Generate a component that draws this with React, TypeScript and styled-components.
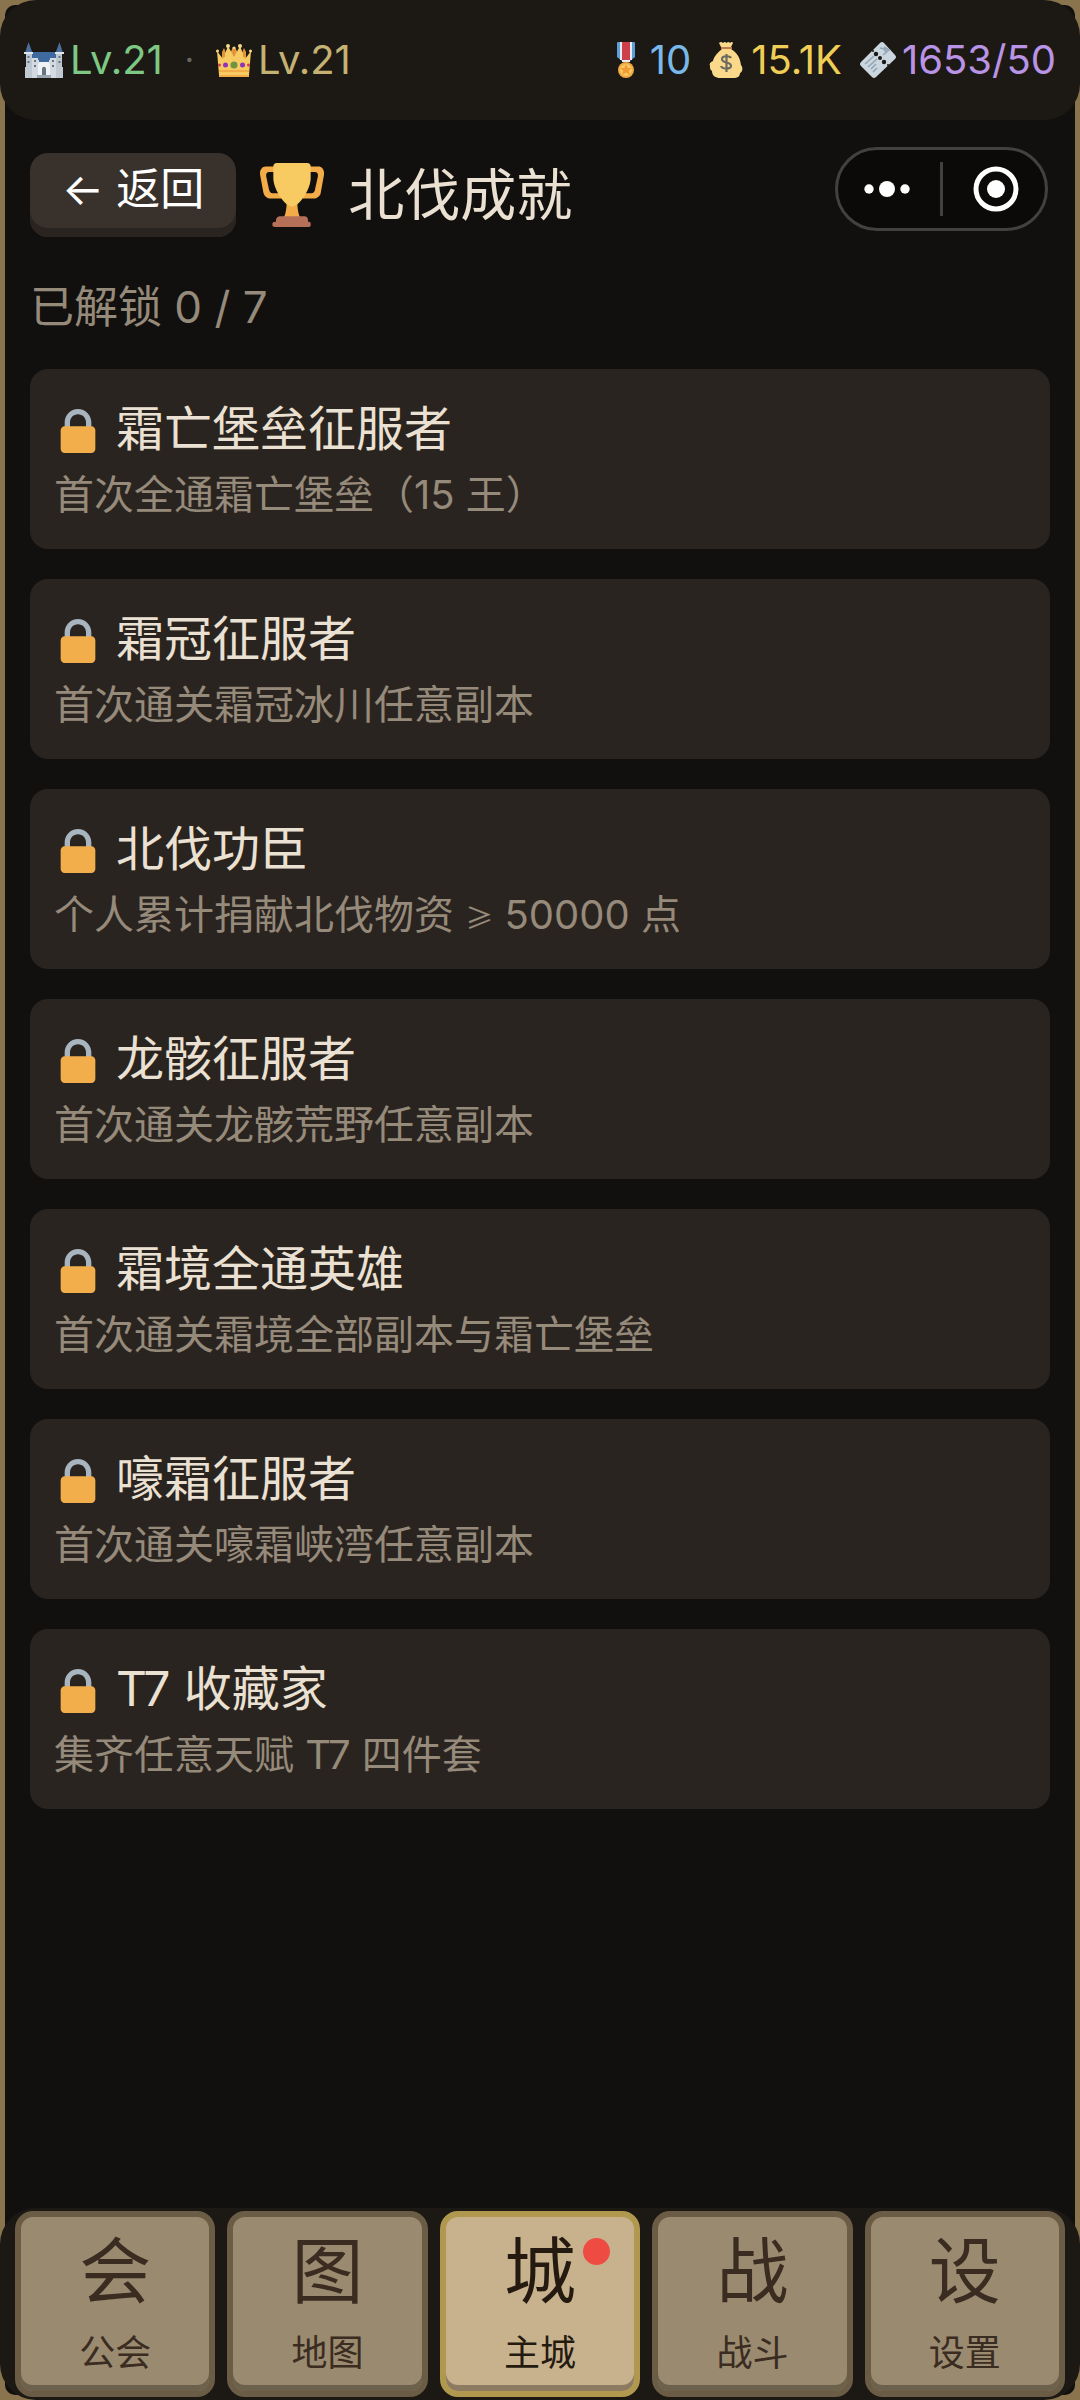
import React from "react";
import styled, { createGlobalStyle } from "styled-components";

const Global = createGlobalStyle`
  *, *::before, *::after { box-sizing: border-box; }
  body {
    margin: 0;
    background: #8a744e;
    font-family: Inter, "Noto Sans CJK SC", "Noto Sans", sans-serif;
    font-weight: 400;
  }
  button { font: inherit; border: 0; margin: 0; padding: 0; cursor: pointer; }
  h1, h2, p, ul { margin: 0; padding: 0; font-weight: 400; }
  svg { display: block; flex: none; }
`;

const Shell = styled.div`
  position: relative;
  isolation: isolate;
  display: flex;
  flex-direction: column;
  min-height: 100vh;
  background: #8a744e;

  &::before {
    content: "";
    position: absolute;
    z-index: -1;
    inset: 5px;
    border-radius: 10px;
    background: #11100e;
  }
`;

const StatusBar = styled.header`
  display: flex;
  align-items: center;
  justify-content: space-between;
  height: 120px;
  padding: 0 24px;
  border-radius: 36px;
  background: #1c1914;
`;

const StatGroup = styled.div<{ $gap: number }>`
  display: flex;
  align-items: center;
  gap: ${(p) => p.$gap}px;
`;

const Stat = styled.span<{ $color: string }>`
  display: flex;
  align-items: center;
  gap: 6px;
  color: ${(p) => p.$color};
  font-size: 40px;
  line-height: 60px;
`;

const Separator = styled.span`
  color: #68676a;
  font-size: 32px;
  line-height: 60px;
`;

const Main = styled.main`
  flex: 1;
  padding: 33px 30px 60px;
`;

const TitleRow = styled.div`
  display: flex;
  align-items: center;
  gap: 24px;
`;

const BackButton = styled.button`
  height: 84px;
  padding: 0 32px 12px;
  border-radius: 18px;
  background: #39312b;
  box-shadow: inset 0 -9px 0 #29241f;
  color: #ffffff;
  font-size: 44px;
  line-height: 60px;
`;

const Title = styled.h1`
  display: flex;
  align-items: center;
  gap: 24px;
  color: #ebe1d3;
  font-size: 56px;
  line-height: 80px;
`;

const Progress = styled.p`
  margin: 40px 0 32px;
  color: #968a7a;
  font-size: 44px;
  line-height: 60px;
`;

const List = styled.ul`
  display: flex;
  flex-direction: column;
  gap: 30px;
  list-style: none;
`;

const Card = styled.li`
  display: flex;
  flex-direction: column;
  gap: 8px;
  padding: 30px 24px 26px;
  border-radius: 18px;
  background: #2a2420;
`;

const CardTitle = styled.h2`
  display: flex;
  align-items: center;
  gap: 14px;
  color: #ebe1d3;
  font-size: 48px;
  line-height: 60px;
`;

const CardText = styled.p`
  color: #968a7a;
  font-size: 40px;
  line-height: 56px;
`;

const Sign = styled.span`
  font-family: "Noto Sans CJK SC", sans-serif;
  font-size: 28px;
  line-height: 1;
`;

/* The host app's menu capsule floats above the page. */
const Capsule = styled.div`
  position: absolute;
  top: 147px;
  right: 32px;
  display: flex;
  align-items: center;
  width: 213px;
  height: 84px;
  border: 3px solid #424140;
  border-radius: 42px;
  background: #0b0a09;
`;

const CapsuleButton = styled.button`
  display: flex;
  flex: 1;
  align-items: center;
  justify-content: center;
  height: 100%;
  background: transparent;

  &:first-child { padding-right: 4px; }
  &:last-child { padding-left: 4px; }
`;

const CapsuleLine = styled.span`
  width: 3px;
  height: 54px;
  background: #424140;
`;

const Nav = styled.nav`
  display: grid;
  grid-template-columns: repeat(5, 1fr);
  gap: 12px;
  padding: 3px 15px;
  border-radius: 36px;
  background: #1c1914;
`;

const NavTile = styled.button<{ $active: boolean }>`
  position: relative;
  display: flex;
  flex-direction: column;
  align-items: center;
  gap: 20px;
  height: 186px;
  padding-top: 14px;
  border: 6px solid ${(p) => (p.$active ? "#b0984f" : "#6b5c46")};
  border-radius: 18px;
  background: ${(p) => (p.$active ? "#c8b28d" : "#9a8a70")};
  box-shadow: inset 0 -6px 0 ${(p) => (p.$active ? "#8c7b60" : "#6c614b")};
  color: ${(p) => (p.$active ? "#241a10" : "#3a2c20")};
`;

const NavGlyph = styled.span`
  font-size: 72px;
  line-height: 80px;
`;

const NavLabel = styled.span`
  font-size: 36px;
  line-height: 44px;
`;

const Dot = styled.span`
  position: absolute;
  top: 21px;
  right: 24px;
  width: 27px;
  height: 27px;
  border-radius: 50%;
  background: #ee4c43;
`;

const CastleIcon = () => (
  <svg width="40" height="36" viewBox="0 0 40 36" aria-hidden="true">
    <path fill="#3f6aa0" d="M8 10h24v8H8z" />
    <path fill="#4a6f9c" d="M4.500 0 8.500 11H1zM35.500 0 39 11h-7.500z" />
    <path fill="#bcc6d0" d="M2 11h6v25H2zM32 11h6v25h-6z" />
    <path fill="#dfe5ea" d="M0 10h9v2H0zM31 10h9v2h-9z" />
    <path fill="#d3dae1" d="M8 16h6v2h12v-2h6v20H8z" />
    <path fill="#c0c9d2" d="M1 25h7v11H1zM32 25h7v11h-7z" />
    <path fill="#3f6aa0" d="M15 17h10v3H15z" />
    <path fill="#eef2f5" d="M14 23l1-3h10l1 3v10H14z" />
    <path fill="#66757f" d="M18 33v-6c0-3 4-3 4 0v6zM3.500 14h2v2h-2zM3.500 19h2v2h-2zM34.500 14h2v2h-2zM34.500 19h2v2h-2zM10 18h2v2h-2zM10 23h2v2h-2zM28 18h2v2h-2zM28 23h2v2h-2z" />
    <path fill="#9aa7b2" d="M13 33h14v3H13z" />
  </svg>
);

const CrownIcon = () => (
  <svg width="36" height="33" viewBox="0 0 36 33" aria-hidden="true">
    <path fill="#e59a3c" d="M6 8 8 4l4 10 5-11h2l5 11 4-10 2 4v10H6z" />
    <path fill="#f7cb62" d="M3 31 1 7l6 8 5-13 6 11 6-11 5 13 6-8-2 24z" />
    <path fill="#f0ad48" d="M3 26h30v2H3zM3 31h30v2H3z" />
    <g fill="#f9d98a">
      <circle cx="1.500" cy="7" r="1.500" />
      <circle cx="12" cy="2" r="2" />
      <circle cx="18" cy="4" r="1.500" />
      <circle cx="24" cy="2" r="2" />
      <circle cx="34.500" cy="7" r="1.500" />
    </g>
    <path fill="#e0923a" d="M7 6h2v7H7zM17 5h2v7h-2zM27 6h2v7h-2z" />
    <circle cx="18" cy="21" r="3.500" fill="#6d9540" />
    <circle cx="9.500" cy="21" r="2.500" fill="#9232b8" />
    <circle cx="26.500" cy="21" r="2.500" fill="#9232b8" />
    <circle cx="3.500" cy="21" r="1.500" fill="#d63e4e" />
    <circle cx="32.500" cy="21" r="1.500" fill="#d63e4e" />
  </svg>
);

const MedalIcon = () => (
  <svg width="36" height="36" viewBox="0 0 36 36" aria-hidden="true">
    <path fill="#5c9fd6" d="M9 1q0-1 1-1h16q1 0 1 1v14l-5 4h-8l-5-4z" />
    <path fill="#e5edf4" d="M12 0h12v18H12z" />
    <path fill="#cf3f4b" d="M14 0h8v19h-8z" />
    <path fill="#e5edf4" d="M14 18h8v2h-8z" />
    <circle cx="18" cy="28" r="8" fill="#f1a842" />
    <circle cx="18" cy="28" r="6" fill="#f8ca62" />
    <path fill="#f09b35" d="m18 22 1.800 4h4.200l-3.300 2.700 1.300 4.300-4-2.500-4 2.500 1.300-4.300L12 26h4.200z" />
  </svg>
);

const MoneyIcon = () => (
  <svg width="36" height="36" viewBox="0 0 36 36" aria-hidden="true">
    <path fill="#fad98a" d="M13 7C7 12 5 15 4 19c-3 1-4 3-3 5 0 2 0 4 2 5 0 5 4 7 8 7h13c5 0 7-2 7-5 3-1 3-6 1-8C31 15 28 11 22 7z" />
    <path fill="#fad98a" d="M12 5 10 1q2-2 4 0 2-2 3.500 0 2-2 3.500 0 2-2 3 0l-2 4z" />
    <path fill="#c47b4c" d="M12 5h11v2H12z" />
    <path fill="none" stroke="#6b6b62" strokeWidth="2.200" d="M22 16c-1-2-9-3-9 1 0 5 9 2 9 7 0 4-9 3-10 0M17.500 12v18" />
  </svg>
);

const TicketIcon = () => (
  <svg width="36" height="36" viewBox="0 0 36 36" aria-hidden="true">
    <path fill="#cbd6df" d="M20 1q2-2 4 0l11 12q2 2 0 4L16 35q-2 2-4 0L1 24q-2-2 0-4z" />
    <g fill="#1c1914">
      <circle cx="16" cy="12" r="2.200" />
      <circle cx="20" cy="16" r="2" />
      <circle cx="24" cy="20" r="2.200" />
      <circle cx="13" cy="9" r="1" />
      <circle cx="28" cy="23" r="1" />
    </g>
    <path fill="none" stroke="#93a6b5" strokeWidth="1.600" d="m5 22 9-8M8 25l9-8M11 27l5-5M13 30l4-4M20 6l9 2-6 5M29 8l-5-3M24 7l2 3" />
  </svg>
);

const TrophyIcon = () => (
  <svg width="64" height="64" viewBox="0 0 36 36" aria-hidden="true">
    <path fill="#f3ac48" d="M5.123 5h6C12.227 5 13 4.896 13 6V4c0-1.104-.773-2-1.877-2h-8c-2 0-3.583 2.125-3 5 0 0 1.791 9.375 1.917 9.958C2.373 18.500 4.164 20 6.081 20h6.958c1.105 0-.039-1.896-.039-3v-2c0 1.104-.773 2-1.877 2h-4c-1.104 0-1.833-1.042-2-2S3.539 7.667 3.539 7.667C3.206 5.750 4.018 5 5.123 5zm25.812 0h-6C23.831 5 22 4.896 22 6V4c0-1.104 1.831-2 2.935-2h8c2 0 3.584 2.125 3 5 0 0-1.633 9.419-1.771 10-.354 1.500-2.042 3-4 3h-7.146C21.914 20 22 18.104 22 17v-2c0 1.104 1.831 2 2.935 2h4c1.104 0 1.834-1.042 2-2s1.584-7.333 1.584-7.333C32.851 5.750 32.040 5 30.935 5zM15 22c0 7-2 10-3.200 11h12.300C23 32 21 29 21 22z" />
    <path fill="#f7cb62" d="M7.500 2q0-2 2-2h17q2 0 2 2v6.500C28.500 15 22 24.500 18 24.500S7.500 15 7.500 8.500z" />
    <path fill="#b77058" d="M27 33v2H9v-3c0-1.104 1.164-2 2.206-2h13.917c1.042 0 1.877.896 1.877 2v1z" />
    <path fill="#b77058" d="M28.500 35q0 1-1 1h-19q-1.500 0-1.500-1v-1q0-1 1.500-1h19q1 0 1 1z" />
  </svg>
);

const LockIcon = () => (
  <svg width="48" height="48" viewBox="0 0 36 36" role="img" aria-label="未解锁">
    <path fill="#a9b5be" d="M18 3C12.477 3 8 7.477 8 13v10h4V13c0-3.313 2.686-6 6-6s6 2.687 6 6v10h4V13c0-5.523-4.477-10-10-10z" />
    <path fill="#f3ae4c" d="M31 33c0 1.700-1.300 3-3 3H8c-1.700 0-3-1.300-3-3V19c0-1.700 1.300-3 3-3h20c1.700 0 3 1.300 3 3z" />
  </svg>
);

const achievements: { title: string; text: React.ReactNode }[] = [
  { title: "霜亡堡垒征服者", text: "首次全通霜亡堡垒（15 王）" },
  { title: "霜冠征服者", text: "首次通关霜冠冰川任意副本" },
  { title: "北伐功臣", text: <>个人累计捐献北伐物资 <Sign>≥</Sign> 50000 点</> },
  { title: "龙骸征服者", text: "首次通关龙骸荒野任意副本" },
  { title: "霜境全通英雄", text: "首次通关霜境全部副本与霜亡堡垒" },
  { title: "嚎霜征服者", text: "首次通关嚎霜峡湾任意副本" },
  { title: "T7 收藏家", text: "集齐任意天赋 T7 四件套" },
];

const tabs = [
  { glyph: "会", label: "公会" },
  { glyph: "图", label: "地图" },
  { glyph: "城", label: "主城", active: true, badge: true },
  { glyph: "战", label: "战斗" },
  { glyph: "设", label: "设置" },
];

export default function App() {
  return (
    <>
      <Global />
      <Shell>
        <StatusBar>
          <StatGroup $gap={22}>
            <Stat $color="#7dc885"><CastleIcon />Lv.21</Stat>
            <Separator>·</Separator>
            <Stat $color="#c5b273"><CrownIcon />Lv.21</Stat>
          </StatGroup>
          <StatGroup $gap={18}>
            <Stat $color="#79b9ea"><MedalIcon />10</Stat>
            <Stat $color="#f0ce56"><MoneyIcon />15.1K</Stat>
            <Stat $color="#b994e6"><TicketIcon />1653/50</Stat>
          </StatGroup>
        </StatusBar>

        <Capsule>
          <CapsuleButton aria-label="更多">
            <svg width="46" height="16" viewBox="0 0 46 16" fill="#fff" aria-hidden="true">
              <circle cx="5" cy="8" r="4.700" />
              <circle cx="23" cy="8" r="8" />
              <circle cx="41" cy="8" r="4.700" />
            </svg>
          </CapsuleButton>
          <CapsuleLine />
          <CapsuleButton aria-label="关闭">
            <svg width="46" height="46" viewBox="0 0 46 46" aria-hidden="true">
              <circle cx="23" cy="23" r="20" fill="none" stroke="#fff" strokeWidth="5" />
              <circle cx="23" cy="23" r="9" fill="#fff" />
            </svg>
          </CapsuleButton>
        </Capsule>

        <Main>
          <TitleRow>
            <BackButton>← 返回</BackButton>
            <Title><TrophyIcon />北伐成就</Title>
          </TitleRow>
          <Progress>已解锁 0 / 7</Progress>
          <List>
            {achievements.map((a) => (
              <Card key={a.title}>
                <CardTitle><LockIcon />{a.title}</CardTitle>
                <CardText>{a.text}</CardText>
              </Card>
            ))}
          </List>
        </Main>

        <Nav>
          {tabs.map((t) => (
            <NavTile key={t.label} $active={!!t.active} aria-current={t.active ? "page" : undefined}>
              <NavGlyph>{t.glyph}</NavGlyph>
              <NavLabel>{t.label}</NavLabel>
              {t.badge && <Dot />}
            </NavTile>
          ))}
        </Nav>
      </Shell>
    </>
  );
}
